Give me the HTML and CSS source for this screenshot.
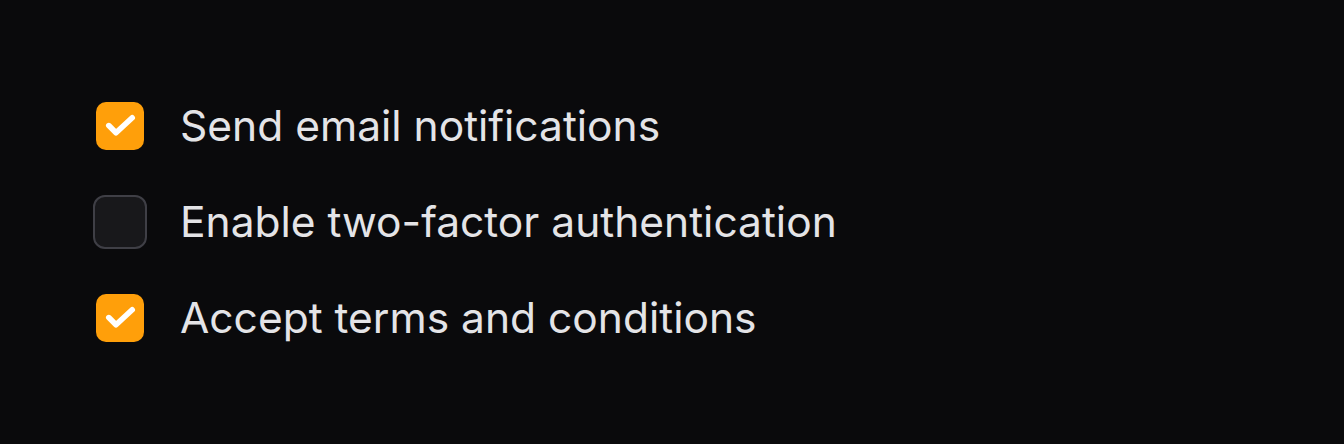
FILE: index.html
```html
<!DOCTYPE html>
<html>
<head>
<meta charset="utf-8">
<link rel="stylesheet" href="styles.css">
</head>
<body>
<div class="list">
  <label class="row">
    <span class="box checked"><svg viewBox="0 0 24 24" width="48" height="48"><path d="M6.4 11.8L10 15.4L18.1 7.9" fill="none" stroke="#fff" stroke-width="2.8" stroke-linecap="round" stroke-linejoin="round"/></svg></span>
    <span class="text">Send email notifications</span>
  </label>
  <label class="row">
    <span class="box empty"></span>
    <span class="text">Enable two-factor authentication</span>
  </label>
  <label class="row">
    <span class="box checked"><svg viewBox="0 0 24 24" width="48" height="48"><path d="M6.4 11.8L10 15.4L18.1 7.9" fill="none" stroke="#fff" stroke-width="2.8" stroke-linecap="round" stroke-linejoin="round"/></svg></span>
    <span class="text">Accept terms and conditions</span>
  </label>
</div>
</body>
</html>
```
FILE: styles.css
```css
html, body {
  margin: 0;
  padding: 0;
  background: #0a0a0c;
  width: 1344px;
  height: 444px;
  overflow: hidden;
}
.list {
  display: flex;
  flex-direction: column;
  gap: 42px;
  padding: 99px 0 0 93px;
}
.row {
  display: flex;
  align-items: center;
  height: 54px;
}
.box {
  box-sizing: border-box;
  width: 54px;
  height: 54px;
  display: flex;
  align-items: center;
  justify-content: center;
  flex: none;
}
.box svg {
  display: block;
}
.box.checked {
  width: 48px;
  height: 48px;
  margin: 0 3px;
  background: #ff9f0a;
  border-radius: 10px;
}
.box.empty {
  background: #18181b;
  border: 2px solid #3f3f46;
  border-radius: 12px;
}
.text {
  margin-left: 33px;
  font-family: Inter, "Noto Sans", sans-serif;
  font-size: 42.5px;
  color: #e4e4e7;
  line-height: 1;
}
```
